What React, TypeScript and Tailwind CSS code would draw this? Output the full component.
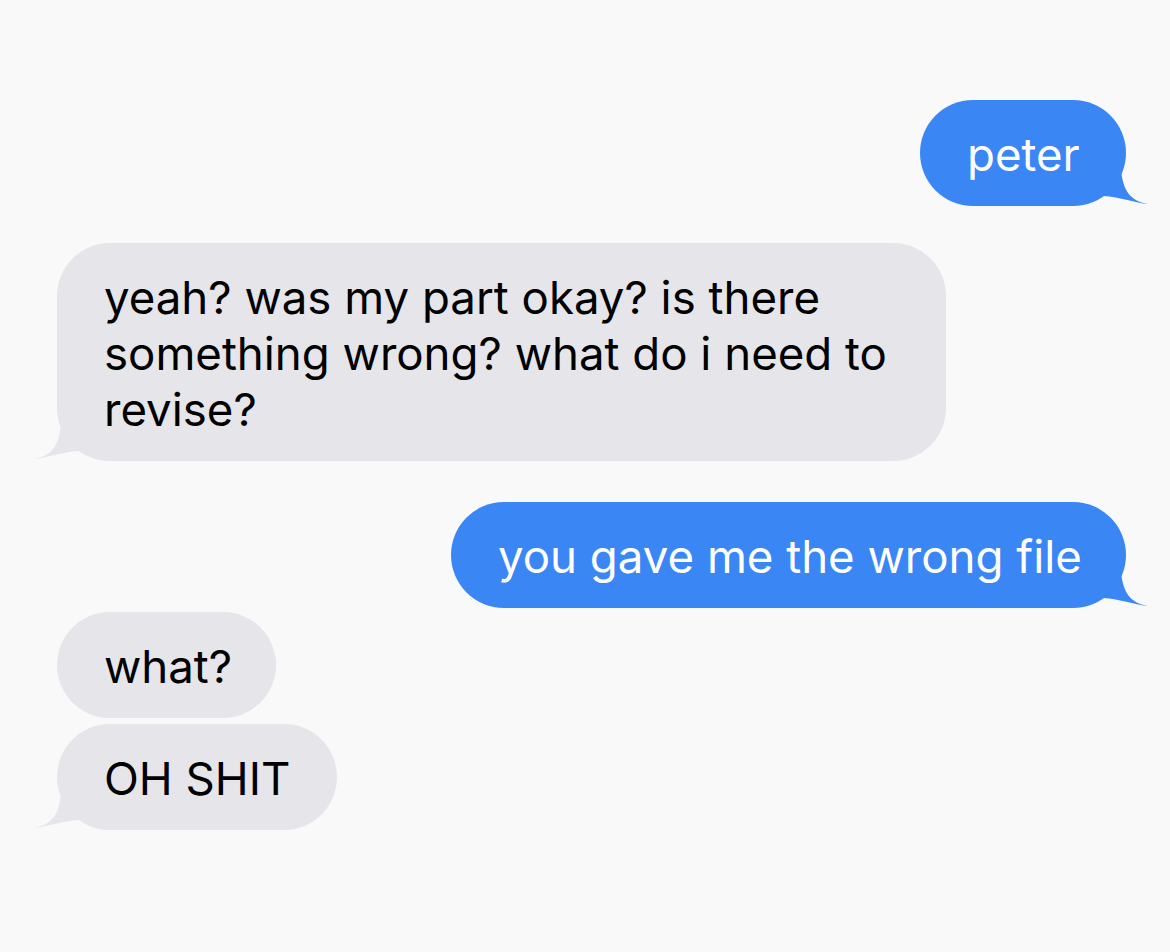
import React from "react";

const BLUE = "#3a86f5";

function Tail({ side, color }: { side: "left" | "right"; color: string }) {
  return (
    <svg
      viewBox="0 0 60 48"
      width={60}
      height={48}
      className={
        side === "right"
          ? "absolute right-[-24px] bottom-[-2px]"
          : "absolute left-[-25px] bottom-[-2px] -scale-x-100"
      }
    >
      <path
        d="M8 18 L31 10 C33 30 40 41 58 44 C46 43 30 37 13 36 Z"
        fill={color}
      />
    </svg>
  );
}

function Bubble({
  side,
  width,
  tail,
  mt,
  children,
}: {
  side: "left" | "right";
  width: string;
  tail?: boolean;
  mt: string;
  children: React.ReactNode;
}) {
  const isRight = side === "right";
  return (
    <div className={`flex ${isRight ? "justify-end" : "justify-start"} ${mt}`}>
      <div
        className={`relative ${width} rounded-[53px] pl-[47px] pt-[27px] pb-[23px] text-[45.6px] leading-[56px] whitespace-nowrap ${
          isRight ? "bg-[#3a86f5] text-white" : "bg-[#e5e5ea] text-black"
        }`}
      >
        {tail && <Tail side={side} color={isRight ? BLUE : "#e5e5ea"} />}
        <span className="relative">{children}</span>
      </div>
    </div>
  );
}

export default function App() {
  return (
    <div
      className="w-[1170px] h-[952px] bg-[#f9f9f9] overflow-hidden pl-[57px] pr-[44px] pt-[100px]"
      style={{ fontFamily: 'Inter, "Liberation Sans", Arial, sans-serif' }}
    >
      <Bubble side="right" width="w-[206px]" tail mt="mt-0">
        peter
      </Bubble>
      <Bubble side="left" width="w-[889px]" tail mt="mt-[37px]">
        yeah? was my part okay? is there
        <br />
        something wrong? what do i need to
        <br />
        revise?
      </Bubble>
      <Bubble side="right" width="w-[675px]" tail mt="mt-[41px]">
        you gave me the wrong file
      </Bubble>
      <Bubble side="left" width="w-[219px]" mt="mt-[4px]">
        what?
      </Bubble>
      <Bubble side="left" width="w-[280px]" tail mt="mt-[6px]">
        OH SHIT
      </Bubble>
    </div>
  );
}
